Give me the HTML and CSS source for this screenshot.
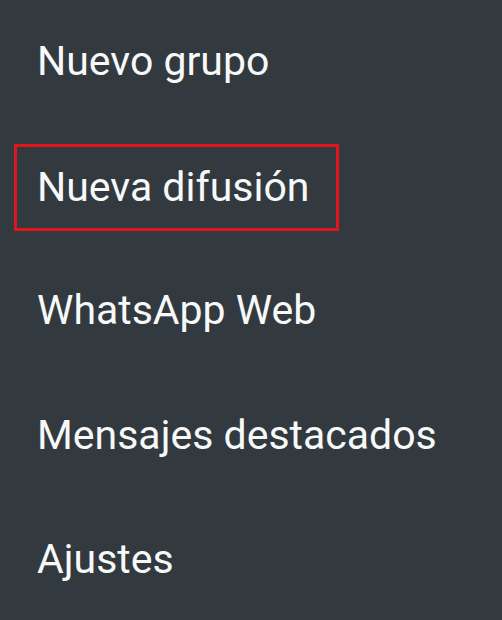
FILE: index.html
```html
<!DOCTYPE html>
<html lang="es">
<head>
<meta charset="utf-8">
<title>Menú</title>
<link rel="stylesheet" href="styles.css">
</head>
<body>
<ul class="menu">
  <li class="menu-item"><span class="label">Nuevo grupo</span></li>
  <li class="menu-item"><span class="label highlight">Nueva difusión</span></li>
  <li class="menu-item"><span class="label">WhatsApp Web</span></li>
  <li class="menu-item"><span class="label">Mensajes destacados</span></li>
  <li class="menu-item"><span class="label">Ajustes</span></li>
</ul>
</body>
</html>
```

FILE: styles.css
```css
html, body {
  margin: 0;
  padding: 0;
  background: #323a40;
  height: 100%;
}

body {
  font-family: Roboto, "Noto Sans", "Liberation Sans", sans-serif;
  color: #f7f8f8;
  overflow: hidden;
}

.menu {
  list-style: none;
  margin: -1px 0 0;
  padding: 0;
  display: flex;
  flex-direction: column;
}

.menu-item {
  height: 124.5px;
  padding-left: 37px;
  display: flex;
  align-items: center;
}

.label {
  font-size: 41px;
  line-height: 48px;
  white-space: nowrap;
}

.highlight {
  margin-left: -23px;
  margin-top: 4px;
  padding: 16px 27px 17px 20px;
  border: 3px solid #e0161d;
}
```
